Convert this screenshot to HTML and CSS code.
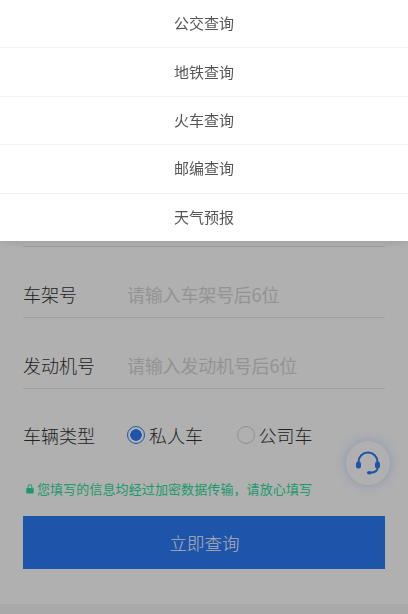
FILE: index.html
```html
<!DOCTYPE html>
<html lang="zh-CN">
<head>
<meta charset="utf-8">
<title>查询</title>
<link rel="stylesheet" href="styles.css">
</head>
<body>
<main class="page">
  <form class="form">
    <div class="row-top"></div>
    <div class="row"><span class="label">车架号</span><span class="placeholder">请输入车架号后6位</span></div>
    <div class="row"><span class="label">发动机号</span><span class="placeholder">请输入发动机号后6位</span></div>
    <div class="type-row">
      <span class="label">车辆类型</span>
      <span class="radio-group">
        <span class="radio radio-on"></span><span class="radio-text">私人车</span>
      </span>
      <span class="radio-group">
        <span class="radio"></span><span class="radio-text">公司车</span>
      </span>
    </div>
    <p class="note">
      <svg class="lock" viewBox="0 0 8 10" aria-hidden="true"><path d="M1.6 4V2.7a2.4 2.4 0 0 1 4.8 0V4h.6a.7.7 0 0 1 .7.7v4.1a.7.7 0 0 1-.7.7H1a.7.7 0 0 1-.7-.7V4.700A.7.7 0 0 1 1 4zm1 0h2.800V2.700a1.400 1.400 0 0 0-2.800 0z" fill-rule="evenodd"/></svg>
      <span class="note-text">您填写的信息均经过加密数据传输，请放心填写</span>
    </p>
    <button class="submit" type="button">立即查询</button>
  </form>
  <div class="service">
    <svg viewBox="0 0 26 26" width="26" height="26" aria-hidden="true">
      <path class="hs-band" d="M3.500 13V12a9.500 9.500 0 0 1 19 0v1"/>
      <rect class="hs-fill" x="1" y="11.500" width="5" height="7" rx="2.200"/>
      <rect class="hs-fill" x="20" y="11.500" width="5" height="7" rx="2.200"/>
      <path class="hs-arm" d="M22.500 18c0 2.800-3 4.500-7 4.700"/>
      <ellipse class="hs-fill" cx="14.300" cy="22.700" rx="2.400" ry="1.700"/>
    </svg>
  </div>
</main>
<div class="overlay"></div>
<nav class="menu">
  <a class="menu-item">公交查询</a>
  <a class="menu-item">地铁查询</a>
  <a class="menu-item">火车查询</a>
  <a class="menu-item">邮编查询</a>
  <a class="menu-item">天气预报</a>
</nav>
</body>
</html>
```
FILE: styles.css
```css
* { box-sizing: border-box; }
html, body { margin: 0; height: 100%; overflow: hidden; }
body {
  background: #f5f5f5;
  font-family: "Noto Sans CJK SC", "Liberation Sans", sans-serif;
  color: #333;
}
.page {
  position: relative;
  height: 604px;
  background: #fff;
}
.form { padding: 0 23px; }
.row-top { height: 247px; border-bottom: 1px solid #e8e8e8; }
.row {
  height: 71px;
  border-bottom: 1px solid #e8e8e8;
  display: flex;
  align-items: center;
  font-size: 18px;
  padding-top: 24px;
}
.label { width: 104px; flex: none; font-size: 18px; line-height: 24px; font-weight: 300; }
.placeholder { color: #d6d6d6; font-size: 18px; line-height: 24px; letter-spacing: -0.2px; }
.type-row {
  display: flex;
  align-items: center;
  height: 24px;
  margin-top: 34px;
}
.radio-group { display: flex; align-items: center; width: 109.500px; flex: none; }
.radio {
  width: 18px;
  height: 18px;
  border: 1px solid #d0d0d0;
  border-radius: 50%;
  margin-right: 4px;
  flex: none;
  background: #fff;
}
.radio-on {
  border-color: #2e7af8;
  background: radial-gradient(circle, #2e7af8 0 5.500px, #fff 6px);
}
.radio-text { font-size: 18px; line-height: 24px; font-weight: 300; }
.note {
  margin: 32px 0 0;
  display: flex;
  align-items: center;
  height: 20px;
  color: #2adf9d;
  font-size: 13px;
  line-height: 20px;
}
.note-text { letter-spacing: 0.1px; }
.lock { width: 8px; height: 10px; margin: 0 3px; fill: #2adf9d; flex: none; }
.submit {
  display: block;
  width: 100%;
  height: 53px;
  margin-top: 17px;
  border: 0;
  padding: 0 0 0 1px;
  background: #2e7af8;
  color: #fff;
  font: inherit;
  font-size: 17.500px;
  font-weight: 300;
}
.service {
  position: absolute;
  left: 346px;
  top: 441px;
  width: 44px;
  height: 44px;
  border-radius: 50%;
  background: #fff;
  box-shadow: 0 0 12px rgba(46, 122, 248, 0.28);
  display: flex;
  align-items: center;
  justify-content: center;
}
.hs-band, .hs-arm { fill: none; stroke: #2e7af8; stroke-width: 2; }
.hs-fill { fill: #2e7af8; }
.overlay {
  position: fixed;
  inset: 0;
  background: rgba(0, 0, 0, 0.31);
}
.menu {
  position: fixed;
  left: 0;
  top: 0;
  width: 100%;
  height: 241px;
  background: #fff;
  box-shadow: 0 2px 8px rgba(0, 0, 0, 0.1);
  display: flex;
  flex-direction: column;
}
.menu-item {
  flex: 1;
  display: flex;
  align-items: center;
  justify-content: center;
  font-size: 15px;
  line-height: 20px;
  padding-bottom: 1px;
  color: #555;
  border-bottom: 1px solid #f2f2f2;
}
.menu-item:last-child { border-bottom: 0; }
```
